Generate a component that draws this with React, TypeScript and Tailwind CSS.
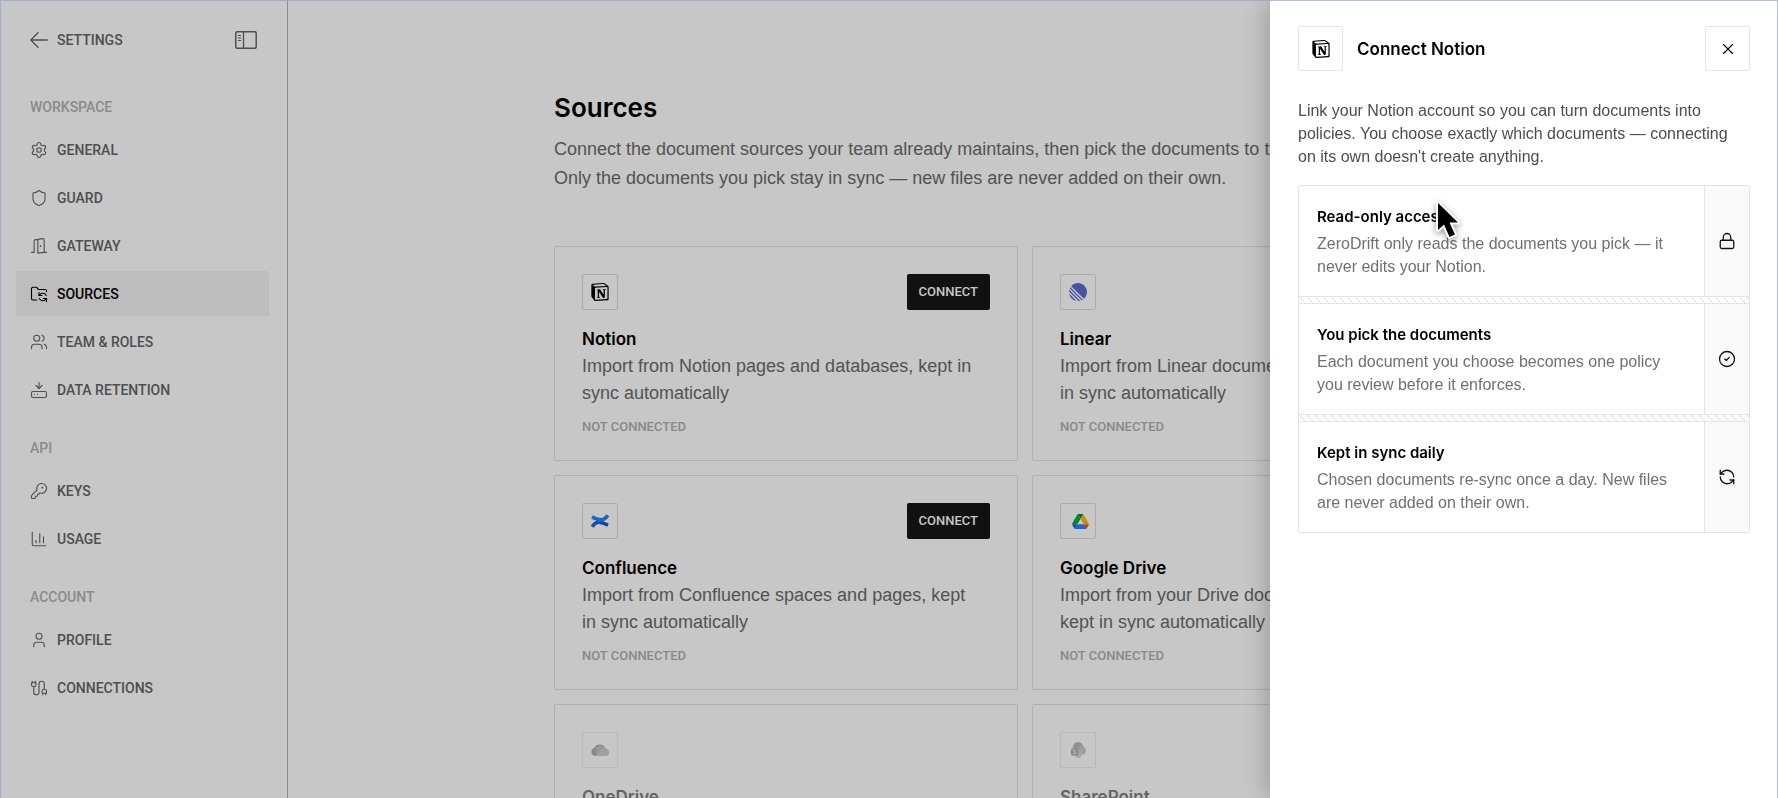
import React from 'react';
import {
  Cable,
  ChartColumn,
  CircleCheck,
  FolderSync,
  HardDriveDownload,
  KeyRound,
  Lock,
  RefreshCcw,
  Settings,
  Shield,
  User,
  Users,
  X,
} from 'lucide-react';
import { SiLinear, SiNotion } from 'react-icons/si';
import clsx from 'clsx';

type IconType = React.ComponentType<{ className?: string; strokeWidth?: number }>;

const GatewayIcon: IconType = ({ className, strokeWidth = 1.5 }) => (
  <svg viewBox="0 0 24 24" fill="none" stroke="currentColor" strokeWidth={strokeWidth} strokeLinecap="round" strokeLinejoin="round" className={className}>
    <path d="M2 20.500h3.500M5.500 20.500V5.500a2 2 0 0 1 2-2h2.500" />
    <path d="M10.500 3.800a1 1 0 0 1 .9-1l5.500-.6a1.800 1.800 0 0 1 2 1.800v16.500H22" />
    <path d="M10.500 3.800v17.700l8.400-1" />
    <path d="M14 11.500v1" />
  </svg>
);

const BackArrow = () => (
  <svg viewBox="0 0 18 16" fill="none" stroke="currentColor" strokeWidth="1.300" strokeLinecap="round" strokeLinejoin="round" className="h-4 w-[18px]">
    <path d="M17.300 8H.8M8 .8L.8 8 8 15.200" />
  </svg>
);

const SidebarIcon = () => (
  <svg viewBox="0 0 22 18" fill="none" stroke="currentColor" className="h-[18px] w-[22px]">
    <rect x="0.8" y="0.8" width="20.400" height="16.400" rx="1.500" strokeWidth="1.500" />
    <path d="M8.500 1v16" strokeWidth="1.300" />
    <path d="M3 4.500h3M3 7h3M3 9.500h3" strokeWidth="1" />
  </svg>
);

const ConfluenceLogo = () => (
  <svg viewBox="0 0 18 14" fill="none" strokeWidth="3.600" className="h-[14px] w-[18px]">
    <defs>
      <linearGradient id="cf-low" x1="1" y1="0" x2="0" y2="0">
        <stop offset="0" stopColor="#0f55c8" />
        <stop offset="1" stopColor="#1c6be0" />
      </linearGradient>
    </defs>
    <path d="M1.200 12.800C5 7 8.500 7.200 17 11.200" stroke="url(#cf-low)" />
    <path d="M1 3C9.500 7 13 7 16.800 1.200" stroke="#2684ff" />
  </svg>
);

const DriveLogo = () => (
  <svg viewBox="0 0 87.300 78" className="ml-1 h-[15px] w-[17px]">
    <path d="m6.600 66.850 3.850 6.650c.8 1.400 1.950 2.500 3.300 3.300l13.750-23.800h-27.500c0 1.550.4 3.100 1.200 4.500z" fill="#0066da" />
    <path d="m43.650 25-13.750-23.800c-1.350.8-2.500 1.900-3.300 3.300l-25.400 44a9.060 9.060 0 0 0 -1.200 4.500h27.500z" fill="#00ac47" />
    <path d="m73.550 76.800c1.350-.8 2.500-1.900 3.300-3.300l1.600-2.750 7.650-13.250c.8-1.400 1.200-2.950 1.200-4.500h-27.502l5.852 11.500z" fill="#ea4335" />
    <path d="m43.650 25 13.750-23.800c-1.350-.8-2.900-1.200-4.500-1.200h-18.500c-1.600 0-3.150.45-4.500 1.200z" fill="#00832d" />
    <path d="m59.800 53h-32.300l-13.750 23.800c1.350.8 2.900 1.200 4.500 1.200h50.800c1.600 0 3.150-.45 4.500-1.200z" fill="#2684fc" />
    <path d="m73.400 26.500-12.700-22c-.8-1.400-1.950-2.500-3.300-3.300l-13.750 23.800 16.150 28h27.450c0-1.550-.4-3.100-1.200-4.500z" fill="#ffba00" />
  </svg>
);

const OneDriveLogo = () => (
  <svg viewBox="0 0 18 12" className="h-[12px] w-[18px]">
    <path d="M4 11.800A4 4 0 0 1 3.300 4 6.200 6.200 0 0 1 14.500 4.200L5 11.800z" fill="#5c5c5c" />
    <path d="M5 3.200A6.200 6.200 0 0 1 14.600 4.300L6 11.800H4.200z" fill="#858585" />
    <path d="M6 11.900c1-4.800 3.500-8 8.300-7.700A3.900 3.900 0 0 1 14.200 12H6z" fill="#9c9c9c" />
  </svg>
);

const SharePointLogo = () => (
  <svg viewBox="0 0 15 16" className="h-[16px] w-[15px]">
    <circle cx="7" cy="5" r="5" fill="#7c7c7c" />
    <circle cx="10.800" cy="8.500" r="4.200" fill="#949494" />
    <circle cx="7.300" cy="12.300" r="3.500" fill="#aaaaaa" />
    <rect y="6.500" width="7" height="7" rx="1" fill="#686868" />
    <path d="M4.800 8.300c-1.500-.7-2.700 0-2.300.9s2.300.7 2.200 1.800-1.800 1-2.600.4" fill="none" stroke="#fff" strokeWidth=".8" />
  </svg>
);

interface NavSection {
  label: string;
  items: { name: string; icon: IconType; active?: boolean }[];
}

const navSections: NavSection[] = [
  {
    label: 'Workspace',
    items: [
      { name: 'General', icon: Settings },
      { name: 'Guard', icon: Shield },
      { name: 'Gateway', icon: GatewayIcon },
      { name: 'Sources', icon: FolderSync, active: true },
      { name: 'Team & Roles', icon: Users },
      { name: 'Data Retention', icon: HardDriveDownload },
    ],
  },
  {
    label: 'API',
    items: [
      { name: 'Keys', icon: KeyRound },
      { name: 'Usage', icon: ChartColumn },
    ],
  },
  {
    label: 'Account',
    items: [
      { name: 'Profile', icon: User },
      { name: 'Connections', icon: Cable },
    ],
  },
];

interface Source {
  name: string;
  description: string;
  logo: React.ReactNode;
  available: boolean;
}

const sources: Source[] = [
  {
    name: 'Notion',
    description: 'Import from Notion pages and databases, kept in sync automatically',
    logo: <SiNotion className="size-[18px] text-black" />,
    available: true,
  },
  {
    name: 'Linear',
    description: 'Import from Linear documents and projects, kept in sync automatically',
    logo: <SiLinear className="size-[18px] text-[#5e6ad2]" />,
    available: true,
  },
  {
    name: 'Confluence',
    description: 'Import from Confluence spaces and pages, kept in sync automatically',
    logo: <ConfluenceLogo />,
    available: true,
  },
  {
    name: 'Google Drive',
    description: 'Import from your Drive documents and folders, kept in sync automatically',
    logo: <DriveLogo />,
    available: true,
  },
  {
    name: 'OneDrive',
    description: 'Import from OneDrive files and folders, kept in sync automatically',
    logo: <OneDriveLogo />,
    available: false,
  },
  {
    name: 'SharePoint',
    description: 'Import from SharePoint sites and libraries, kept in sync automatically',
    logo: <SharePointLogo />,
    available: false,
  },
];

const features: { title: string; text: string; icon: IconType }[] = [
  {
    title: 'Read-only access',
    text: 'ZeroDrift only reads the documents you pick — it never edits your Notion.',
    icon: Lock,
  },
  {
    title: 'You pick the documents',
    text: 'Each document you choose becomes one policy you review before it enforces.',
    icon: CircleCheck,
  },
  {
    title: 'Kept in sync daily',
    text: 'Chosen documents re-sync once a day. New files are never added on their own.',
    icon: RefreshCcw,
  },
];

const Sidebar = () => (
  <aside className="w-72 shrink-0 border-r border-[#b4b4b4] px-4 pt-5 font-[Roboto,sans-serif] text-sm font-medium text-[#666666] uppercase">
    <div className="flex h-10 items-center justify-between px-3.5">
      <a href="#" className="flex items-center gap-[9px] uppercase">
        <BackArrow />
        Settings
      </a>
      <button type="button" aria-label="Toggle sidebar">
        <SidebarIcon />
      </button>
    </div>

    <nav className="mt-[37px] flex flex-col gap-[26px]">
      {navSections.map(section => (
        <div key={section.label}>
          <h2 className="mb-2.5 px-3.5 text-sm font-medium text-[#b2b2b2]">{section.label}</h2>
          <ul className="flex flex-col gap-[3px]">
            {section.items.map(({ name, icon: Icon, active }) => (
              <li key={name}>
                <a
                  href="#"
                  className={clsx(
                    'mr-0.5 flex h-[45px] items-center gap-[9px] rounded-xs px-3.5',
                    active && 'bg-[#f2f2f2] text-black'
                  )}
                >
                  <Icon className="size-[18px]" strokeWidth={1.5} />
                  {name}
                </a>
              </li>
            ))}
          </ul>
        </div>
      ))}
    </nav>
  </aside>
);

const SourceCard = ({ source }: { source: Source }) => (
  <article className="rounded-xs border border-[#e2e2e2] bg-white px-[27px] pt-[27px] pb-[23px]">
    <div className={clsx(!source.available && 'opacity-50')}>
      <div className="flex items-start justify-between">
        <div className="flex size-9 items-center justify-center rounded-xs border border-[#dddddd]">{source.logo}</div>
        {source.available && (
          <button type="button" className="h-9 rounded-xs bg-[#161616] px-3 font-[Roboto,sans-serif] text-[13px] font-medium text-white uppercase">
            Connect
          </button>
        )}
      </div>
      <h2 className="mt-4 font-[Inter,sans-serif] text-[17px] leading-[27px] font-semibold text-black">{source.name}</h2>
      <p className="pr-3 text-lg leading-[27px] text-[#6b6b6b]">{source.description}</p>
      <p className="mt-2.5 font-[Roboto,sans-serif] text-[13px] leading-5 font-medium text-[#b0b0b0] uppercase">Not connected</p>
    </div>
  </article>
);

const ConnectPanel = () => (
  <aside
    role="dialog"
    aria-label="Connect Notion"
    className="fixed inset-y-0 right-0 w-[508px] bg-white px-7 pt-[26px] shadow-[-4px_0_24px_rgba(0,0,0,0.22)]"
  >
    <header className="flex items-center gap-3.5">
      <div className="flex size-[45px] items-center justify-center rounded-xs border border-[#e6e6e6]">
        <SiNotion className="size-[18px]" />
      </div>
      <h2 className="flex-1 font-[Inter,sans-serif] text-[17px] leading-6 font-semibold text-black">Connect Notion</h2>
      <button type="button" aria-label="Close" className="flex size-[45px] items-center justify-center rounded-xs border border-[#e6e6e6]">
        <X className="size-[18px]" strokeWidth={1.5} />
      </button>
    </header>

    <p className="mt-7 pr-4 text-base leading-[23px] text-[#4d4d4d]">
      Link your Notion account so you can turn documents into policies. You choose exactly which documents — connecting
      on its own doesn't create anything.
    </p>

    <ul className="relative mt-[17px] rounded-xs border border-[#e4e4e4]">
      {features.map(({ title, text, icon: Icon }, index) => (
        <li key={title}>
          {index > 0 && (
            <div className="h-2 border-y border-[#e4e4e4] bg-[linear-gradient(45deg,transparent_45%,#d8d8d8_45%_55%,transparent_55%)] bg-size-[8px_8px]" />
          )}
          <div className="flex">
            <div className="flex-1 px-[18px] pt-[19px] pb-[18px]">
              <h3 className="font-[Inter,sans-serif] text-[15px] leading-[23px] font-semibold text-black">{title}</h3>
              <p className="mt-1 text-base leading-[23px] text-[#707070]">{text}</p>
            </div>
            <div className="flex w-[45px] items-center justify-center border-l border-[#e4e4e4] bg-[#fafafa] text-[#111111]">
              <Icon className="size-[18px]" strokeWidth={1.7} />
            </div>
          </div>
        </li>
      ))}
      {/* Mouse pointer */}
      <svg viewBox="0 0 30 42" className="absolute top-[13px] left-[135px] h-[42px] w-[30px] drop-shadow-[0_2px_3px_rgba(0,0,0,0.4)]">
        <path d="M4 4v27l6-5.500 5.500 12.500 5.500-2.500-5.500-12H24z" fill="#000" stroke="#fff" strokeWidth="4" strokeLinejoin="round" className="[paint-order:stroke]" />
      </svg>
    </ul>
  </aside>
);

export default function App() {
  return (
    <div className="relative flex h-screen overflow-hidden bg-white font-['Liberation_Sans',Arial,sans-serif]">
      <Sidebar />

      <main className="flex-1 overflow-hidden pt-[90px] pr-4">
        <div className="mx-auto max-w-[942px]">
          <h1 className="font-[Inter,sans-serif] text-[26px] leading-9 font-semibold text-black">Sources</h1>
          <p className="mt-[9px] text-lg leading-[29px] text-[#6b6b6b]">
            Connect the document sources your team already maintains, then pick the documents to turn into policies.
            <br />
            Only the documents you pick stay in sync — new files are never added on their own.
          </p>
          <div className="mt-[53px] grid grid-cols-2 gap-3.5">
            {sources.map(source => (
              <SourceCard key={source.name} source={source} />
            ))}
          </div>
        </div>
      </main>

      {/* Backdrop */}
      <div className="fixed inset-0 bg-black/22" />
      <ConnectPanel />
      <div className="pointer-events-none fixed inset-0 border border-b-0 border-[#8fa6c4]/70" />
    </div>
  );
}
